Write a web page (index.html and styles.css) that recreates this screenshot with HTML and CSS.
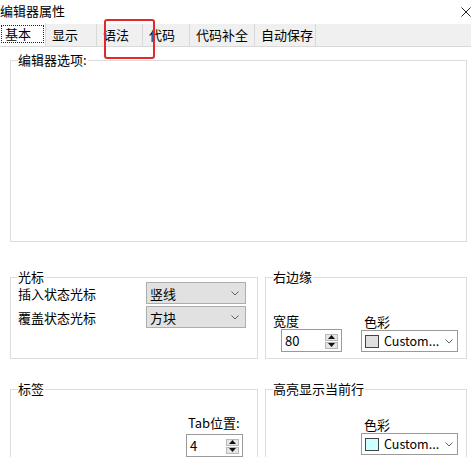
FILE: index.html
```html
<!DOCTYPE html>
<html lang="zh-CN">
<head>
<meta charset="utf-8">
<title>编辑器属性</title>
<link rel="stylesheet" href="styles.css">
</head>
<body>
<div class="window">
  <div class="titlebar">
    <span class="title">编辑器属性</span>
    <svg class="close" width="10" height="10" viewBox="0 0 10 10"><path d="M0.5 0.5L9.5 9.5M9.5 0.5L0.5 9.5" stroke="#222" stroke-width="1" fill="none"/></svg>
  </div>
  <div class="tabs">
    <div class="tab selected"><span class="focus">基本</span></div>
    <div class="tab">显示</div>
    <div class="tab">语法</div>
    <div class="tab">代码</div>
    <div class="tab">代码补全</div>
    <div class="tab">自动保存</div>
  </div>
  <div class="panel">
    <div class="group g-editor">
      <div class="gtitle">编辑器选项:</div>
    </div>
    <div class="row row-mid">
      <div class="group g-cursor">
        <div class="gtitle">光标</div>
        <div class="cursor-grid">
          <span class="lbl">插入状态光标</span>
          <div class="combo"><span>竖线</span><svg class="chev" width="8" height="5" viewBox="0 0 8 5"><path d="M0.5 0.5L4 4L7.5 0.5" stroke="#606060" fill="none"/></svg></div>
          <span class="lbl">覆盖状态光标</span>
          <div class="combo"><span>方块</span><svg class="chev" width="8" height="5" viewBox="0 0 8 5"><path d="M0.5 0.5L4 4L7.5 0.5" stroke="#606060" fill="none"/></svg></div>
        </div>
      </div>
      <div class="group g-margin">
        <div class="gtitle">右边缘</div>
        <div class="margin-row">
          <div class="col-a">
            <span class="lbl">宽度</span>
            <div class="spin spin-width">
              <span class="val">80</span>
              <div class="arrows">
                <span class="arr"><svg width="7" height="4" viewBox="0 0 7 4"><path d="M0 4L3.5 0L7 4Z" fill="#111"/></svg></span>
                <span class="arr"><svg width="7" height="4" viewBox="0 0 7 4"><path d="M0 0L3.5 4L7 0Z" fill="#111"/></svg></span>
              </div>
            </div>
          </div>
          <div class="col-b">
            <span class="lbl">色彩</span>
            <div class="ccombo">
              <span class="swatch sw-gray"></span>
              <span class="ctext">Custom...</span>
              <svg class="chev" width="8" height="5" viewBox="0 0 8 5"><path d="M0.5 0.5L4 4L7.5 0.5" stroke="#606060" fill="none"/></svg>
            </div>
          </div>
        </div>
      </div>
    </div>
    <div class="row row-bottom">
      <div class="group g-tabs">
        <div class="gtitle">标签</div>
        <div class="tabpos">
          <span class="lbl">Tab位置:</span>
          <div class="spin spin-tab">
            <span class="val">4</span>
            <div class="arrows">
              <span class="arr"><svg width="7" height="4" viewBox="0 0 7 4"><path d="M0 4L3.5 0L7 4Z" fill="#111"/></svg></span>
              <span class="arr"><svg width="7" height="4" viewBox="0 0 7 4"><path d="M0 0L3.5 4L7 0Z" fill="#111"/></svg></span>
            </div>
          </div>
        </div>
      </div>
      <div class="group g-hl">
        <div class="gtitle">高亮显示当前行</div>
        <div class="hlcol">
          <span class="lbl">色彩</span>
          <div class="ccombo">
            <span class="swatch sw-cyan"></span>
            <span class="ctext">Custom...</span>
            <svg class="chev" width="8" height="5" viewBox="0 0 8 5"><path d="M0.5 0.5L4 4L7.5 0.5" stroke="#606060" fill="none"/></svg>
          </div>
        </div>
      </div>
    </div>
  </div>
  <div class="annot"></div>
</div>
</body>
</html>
```
FILE: styles.css
```css
* { box-sizing: border-box; }
html, body {
  margin: 0;
  padding: 0;
  background: #fff;
  overflow: hidden;
}
body {
  font-family: "Noto Sans CJK SC", "Noto Sans", sans-serif;
  font-size: 13px;
  color: #000;
  width: 471px;
  height: 457px;
}
.window {
  position: relative;
  width: 471px;
  height: 457px;
  overflow: hidden;
}
.titlebar {
  height: 24px;
  display: flex;
  justify-content: space-between;
  align-items: flex-start;
}
.title {
  line-height: 22px;
  margin-left: 0;
}
.close {
  margin-top: 7px;
  display: block;
}
.tabs {
  display: grid;
  grid-template-columns: 46px 51px 46px 47px 65px 61px;
  grid-template-rows: 22px;
  height: 23px;
  background: #f0f0f0;
  border-bottom: 1px solid #d9d9d9;
}
.tab {
  line-height: 22px;
  padding-left: 6px;
  border-right: 1px solid #d9d9d9;
  white-space: nowrap;
}
.tab.selected {
  background: #fff;
  height: 23px;
  margin-top: -1px;
  padding: 2px 1px 3px 1px;
}
.focus {
  display: block;
  height: 18px;
  line-height: 16px;
  border: 1px dotted #222;
  padding-left: 3px;
}
.panel {
  padding: 13px 0 0 10px;
}
.group {
  border: 1px solid #dcdcdc;
}
.gtitle {
  width: fit-content;
  height: 16px;
  line-height: 16px;
  margin: -9px 0 -7px 7px;
  padding: 0 1px 0 0;
  background: #fff;
  white-space: nowrap;
}
.g-editor {
  width: 457px;
  height: 182px;
}
.row {
  display: grid;
  grid-template-columns: 248px 202px;
  column-gap: 7px;
}
.row-mid {
  margin-top: 35px;
  height: 82px;
}
.row-bottom {
  margin-top: 30px;
  height: 100px;
}
.lbl {
  line-height: 16px;
  white-space: nowrap;
}
.cursor-grid {
  display: grid;
  grid-template-columns: 128px 100px;
  grid-auto-rows: 22px;
  row-gap: 2px;
  align-items: center;
  padding: 4px 0 0 7px;
}
.cursor-grid .lbl {
  line-height: 14px;
  margin-top: 1px;
}
.combo {
  height: 22px;
  background: #e1e1e1;
  border: 1px solid #adadad;
  display: flex;
  align-items: center;
  justify-content: space-between;
  padding: 0 6px 0 3px;
}
.chev { display: block; }
.margin-row {
  display: flex;
  align-items: flex-end;
  padding: 35px 0 0 7px;
}
.col-a {
  width: 88px;
  display: flex;
  flex-direction: column;
  align-items: flex-start;
}
.col-a .spin { margin-left: 8px; }
.col-b {
  display: flex;
  flex-direction: column;
  align-items: flex-start;
}
.col-b .lbl, .hlcol .lbl { margin-left: 3px; }
.spin {
  height: 23px;
  border: 1px solid #9a9a9a;
  background: #fff;
  display: flex;
  align-items: center;
  padding: 0 3px 0 3px;
}
.spin-width { width: 61px; }
.spin-tab { width: 57px; }
.val {
  flex: 1;
  line-height: 16px;
}
.arrows {
  display: flex;
  flex-direction: column;
  gap: 1px;
  margin-top: 1px;
}
.arr {
  width: 13px;
  height: 7px;
  background: #e6e6e6;
  border: 1px solid #b8b8b8;
  display: flex;
  align-items: center;
  justify-content: center;
}
.arr svg { display: block; }
.ccombo {
  width: 97px;
  height: 22px;
  border: 1px solid #9a9a9a;
  background: #fff;
  display: flex;
  align-items: center;
  padding: 0 4px 0 3px;
}
.swatch {
  width: 14px;
  height: 13px;
  border: 1px solid #444;
  flex: none;
}
.sw-gray { background: #e0e0e0; }
.sw-cyan { background: #ccffff; }
.ctext {
  flex: 1;
  margin-left: 5px;
  font-size: 12.5px;
  line-height: 16px;
}
.tabpos {
  display: flex;
  flex-direction: column;
  align-items: flex-start;
  padding: 25px 0 0 175px;
}
.tabpos .lbl { margin-left: 2px; margin-bottom: 3px; }
.hlcol {
  display: flex;
  flex-direction: column;
  align-items: flex-start;
  padding: 27px 0 0 95px;
}
.annot {
  position: absolute;
  left: 104px;
  top: 19px;
  width: 51px;
  height: 40px;
  border: 2px solid #e5262b;
  border-radius: 3px;
}
```
